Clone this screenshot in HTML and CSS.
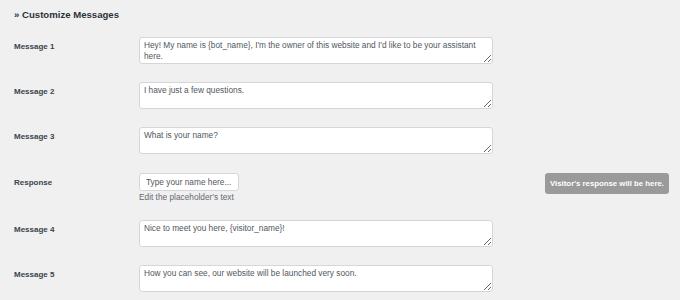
FILE: index.html
```html
<!DOCTYPE html>
<html lang="en">
<head>
  <meta charset="UTF-8">
  <title>Customize Messages</title>
  <link rel="stylesheet" href="styles.css">
</head>
<body>
  <h2 class="section-title">&raquo; Customize Messages</h2>

  <div class="form-table">
    <div class="row">
      <label class="label">Message 1</label>
      <div class="field">
        <textarea class="msg">Hey! My name is {bot_name}, I'm the owner of this website and I'd like to be your assistant here.</textarea>
      </div>
    </div>

    <div class="row">
      <label class="label">Message 2</label>
      <div class="field">
        <textarea class="msg">I have just a few questions.</textarea>
      </div>
    </div>

    <div class="row">
      <label class="label">Message 3</label>
      <div class="field">
        <textarea class="msg">What is your name?</textarea>
      </div>
    </div>

    <div class="row row-response">
      <label class="label">Response</label>
      <div class="field">
        <input type="text" class="answer" value="Type your name here...">
        <p class="description">Edit the placeholder's text</p>
      </div>
      <div class="preview-bubble">Visitor's response will be here.</div>
    </div>

    <div class="row">
      <label class="label">Message 4</label>
      <div class="field">
        <textarea class="msg">Nice to meet you here, {visitor_name}!</textarea>
      </div>
    </div>

    <div class="row">
      <label class="label">Message 5</label>
      <div class="field">
        <textarea class="msg">How you can see, our website will be launched very soon.</textarea>
      </div>
    </div>
  </div>
</body>
</html>
```

FILE: styles.css
```css
body {
  margin: 0;
  padding: 0 11px 0 14px;
  background-color: #f0f0f1;
  color: #1d2327;
  font-family: 'Liberation Sans', Arial, sans-serif;
  font-size: 8.3px;
}

.section-title {
  font-size: 9.6px;
  font-weight: 700;
  margin: 0;
  padding-top: 9px;
  line-height: 12px;
  color: #2c3338;
}

.form-table {
  display: flex;
  flex-direction: column;
  margin-top: 16px;
  gap: 18px;
}

.row {
  display: flex;
  align-items: flex-start;
}

.label {
  width: 125px;
  flex-shrink: 0;
  font-size: 8px;
  font-weight: 700;
  color: #3c434a;
  padding-top: 4px;
  line-height: 11px;
}

.field {
  display: flex;
  flex-direction: column;
}

.msg {
  box-sizing: border-box;
  width: 354px;
  height: 27px;
  margin: 0;
  padding: 2px 4px;
  border: 1px solid #d6d6d8;
  border-radius: 3px;
  background: #fff;
  color: #50575e;
  font-family: inherit;
  font-size: 8.3px;
  line-height: 11px;
  resize: vertical;
  overflow: hidden;
}

.row-response {
  margin-top: 1px;
}

.answer {
  box-sizing: border-box;
  width: 100px;
  height: 18px;
  margin: 0;
  padding: 0 6px;
  border: 1px solid #d6d6d8;
  border-radius: 3px;
  background: #fff;
  color: #50575e;
  font-family: inherit;
  font-size: 8.3px;
}

.description {
  margin: 2px 0 0;
  color: #646970;
  line-height: 9px;
}

.preview-bubble {
  margin-left: auto;
  background: #9a9a9a;
  color: #fff;
  font-size: 7.8px;
  font-weight: 700;
  border-radius: 3px;
  padding: 0 5px;
  height: 21px;
  line-height: 21px;
  white-space: nowrap;
}
```
